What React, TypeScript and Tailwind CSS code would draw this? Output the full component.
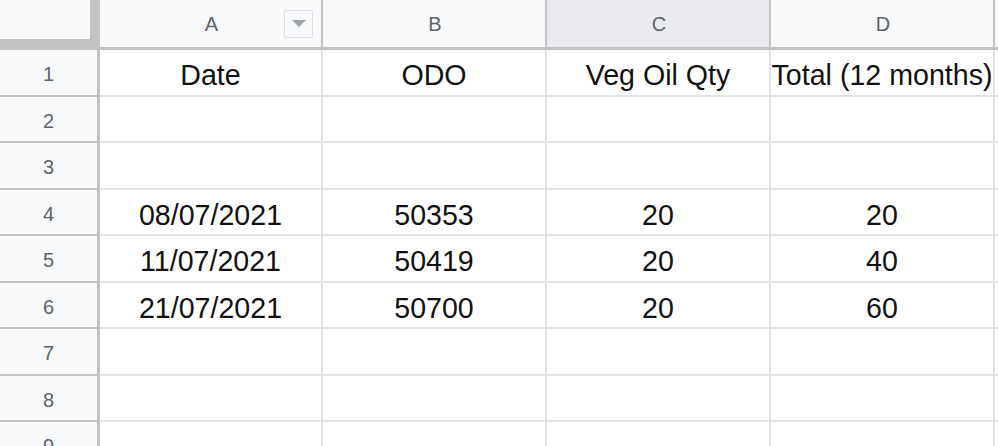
import React from "react";

const cols = ["A", "B", "C", "D", "E"];
const widths = ["w-[223px]", "w-[224px]", "w-[224px]", "w-[224px]", "w-[200px]"];
const rowHeights = ["h-[47px]", "h-[46px]", "h-[47px]", "h-[46px]", "h-[47px]", "h-[46px]", "h-[47px]", "h-[46px]", "h-[47px]"];

const data: string[][] = [
  ["Date", "ODO", "Veg Oil Qty", "Total (12 months)", ""],
  ["", "", "", "", ""],
  ["", "", "", "", ""],
  ["08/07/2021", "50353", "20", "20", ""],
  ["11/07/2021", "50419", "20", "40", ""],
  ["21/07/2021", "50700", "20", "60", ""],
  ["", "", "", "", ""],
  ["", "", "", "", ""],
  ["", "", "", "", ""],
];

export default function App() {
  return (
    <div
      className="w-[998px] h-[446px] overflow-hidden bg-white"
      style={{ fontFamily: '"Liberation Sans", Arial, sans-serif' }}
    >
      {/* header row */}
      <div className="flex h-[50px]">
        <div className="w-[100px] h-[50px] shrink-0 bg-[#c2c2c2]">
          <div className="w-[90px] h-[39px] bg-[#f8f9fa]" />
        </div>
        {cols.map((c, i) => (
          <div
            key={c}
            className={`${widths[i]} shrink-0 h-[50px] border-r-2 border-b-[3px] border-[#c2c2c2] ${
              c === "C" ? "bg-[#e8eaed]" : "bg-[#f8f9fa]"
            } relative flex items-center justify-center text-[20px] text-[#5f6368]`}
          >
            <span className="pt-[1px] pl-[2px]">{c === "E" ? "" : c}</span>
            {c === "A" && (
              <div className="absolute left-[184px] top-[10px] w-[29px] h-[28px] border border-[#dadce0] rounded-[2px] bg-[#f8f9fa] flex items-center justify-center">
                <svg width="14" height="8" viewBox="0 0 14 8">
                  <path d="M0 0 L14 0 L7 7 Z" fill="#a0a4a8" />
                </svg>
              </div>
            )}
          </div>
        ))}
      </div>
      {data.map((row, r) => (
        <div key={r} className={`flex ${rowHeights[r]}`}>
          <div className="w-[100px] shrink-0 bg-[#f8f9fa] border-r-[3px] border-b-2 border-[#c2c2c2] flex items-center justify-center text-[20px] text-[#5f6368]">
            <span className="pt-[3px]">{r + 1}</span>
          </div>
          {row.map((v, c) => (
            <div
              key={c}
              className={`${widths[c]} shrink-0 border-r-2 border-b-2 border-[#e2e3e3] flex items-center justify-center text-[28.6px] text-[#111111] whitespace-nowrap overflow-visible`}
            >
              <span className="pt-[6px] leading-none">{v}</span>
            </div>
          ))}
        </div>
      ))}
    </div>
  );
}
